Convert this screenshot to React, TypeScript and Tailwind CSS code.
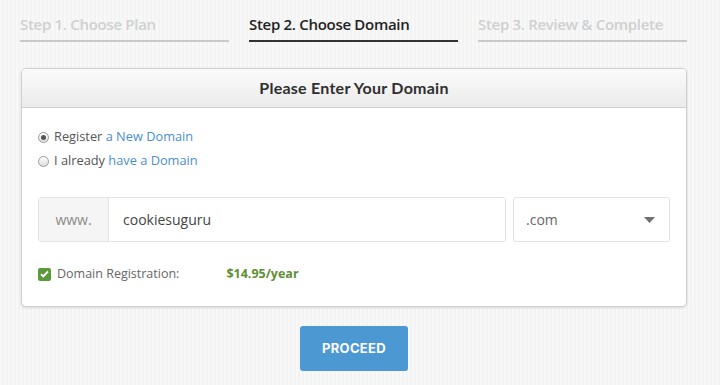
const steps = [
  { label: "Step 1. Choose Plan", active: false },
  { label: "Step 2. Choose Domain", active: true },
  { label: "Step 3. Review & Complete", active: false },
];

export default function App() {
  return (
    <div
      className="w-[720px] h-[385px] overflow-hidden bg-[#f6f6f6] bg-[repeating-linear-gradient(90deg,#f8f8f8_0px,#f8f8f8_2px,#f3f3f3_2px,#f3f3f3_4px)] font-['Open_Sans',sans-serif]"
    >
      {/* steps */}
      <div className="flex gap-[20px] pl-[20px] pt-[13px]">
        {steps.map((s) => (
          <div
            key={s.label}
            className={`w-[209px] h-[29px] text-[15px] font-semibold tracking-[-0.3px] leading-[22px] border-b-2 ${
              s.active
                ? "text-[#222] border-[#333]"
                : "text-[#d0d0d0] border-[#c9c9c9]"
            }`}
          >
            {s.label}
          </div>
        ))}
      </div>

      {/* card */}
      <div className="ml-[21px] mt-[26px] w-[666px] h-[239px] bg-white border border-[#cfcfcf] rounded-[5px] shadow-[0_1px_3px_rgba(0,0,0,0.12)] overflow-hidden">
        <div className="h-[39px] flex items-center justify-center bg-gradient-to-b from-[#fbfbfb] to-[#ebebeb] border-b border-[#cfcfcf]">
          <span className="text-[16px] font-bold text-[#2f2f2f] font-['Lato',sans-serif] tracking-[0.25px]">
            Please Enter Your Domain
          </span>
        </div>

        <div className="pl-[16px] pr-[16px] pt-[19px]">
          <label className="flex items-center gap-[5px] h-[20px] text-[12.8px] text-[#555]">
            <span className="w-[11px] h-[11px] rounded-full border border-[#9a9a9a] bg-gradient-to-b from-[#fff] to-[#ddd] flex items-center justify-center">
              <span className="w-[5px] h-[5px] rounded-full bg-[#555]" />
            </span>
            <span>
              Register <span className="text-[#4a8fcc]">a New Domain</span>
            </span>
          </label>
          <label className="flex items-center gap-[5px] h-[20px] mt-[4px] text-[12.8px] text-[#555]">
            <span className="w-[11px] h-[11px] rounded-full border border-[#9a9a9a] bg-gradient-to-b from-[#fff] to-[#ddd]" />
            <span>
              I already <span className="text-[#4a8fcc]">have a Domain</span>
            </span>
          </label>

          <div className="flex gap-[7px] mt-[26px] h-[45px]">
            <div className="flex w-[468px] border border-[#e3e3e3] rounded-[3px] overflow-hidden">
              <div className="w-[70px] flex items-center justify-center bg-[#f5f5f5] border-r border-[#e3e3e3] text-[14px] text-[#8a8a8a]">
                www.
              </div>
              <div className="flex-1 flex items-center pl-[14px] text-[14px] text-[#444]">
                cookiesuguru
              </div>
            </div>
            <div className="w-[157px] flex items-center justify-between pl-[12px] pr-[14px] border border-[#e3e3e3] rounded-[3px] text-[14px] text-[#666]">
              <span>.com</span>
              <svg width="11" height="6" viewBox="0 0 11 6">
                <path d="M0 0h11L5.5 6z" fill="#6f6f6f" />
              </svg>
            </div>
          </div>

          <div className="flex items-center mt-[22px] h-[20px] text-[12.5px]">
            <span className="w-[13px] h-[13px] rounded-[2px] bg-[#5a9a3c] flex items-center justify-center">
              <svg width="9" height="8" viewBox="0 0 9 8">
                <path d="M1 4.2l2.2 2.2L8 1.5" stroke="#fff" strokeWidth="1.8" fill="none" />
              </svg>
            </span>
            <span className="ml-[6px] text-[#666]">Domain Registration:</span>
            <span className="ml-[47px] font-bold text-[#5f8f35]">$14.95/year</span>
          </div>
        </div>
      </div>

      {/* button */}
      <div className="flex justify-center mt-[19px]">
        <button className="w-[108px] h-[45px] ml-[-12px] rounded-[3px] bg-[#4b98d2] text-white text-[13px] font-bold tracking-[0.3px] font-['Inter',sans-serif]">
          PROCEED
        </button>
      </div>
    </div>
  );
}
